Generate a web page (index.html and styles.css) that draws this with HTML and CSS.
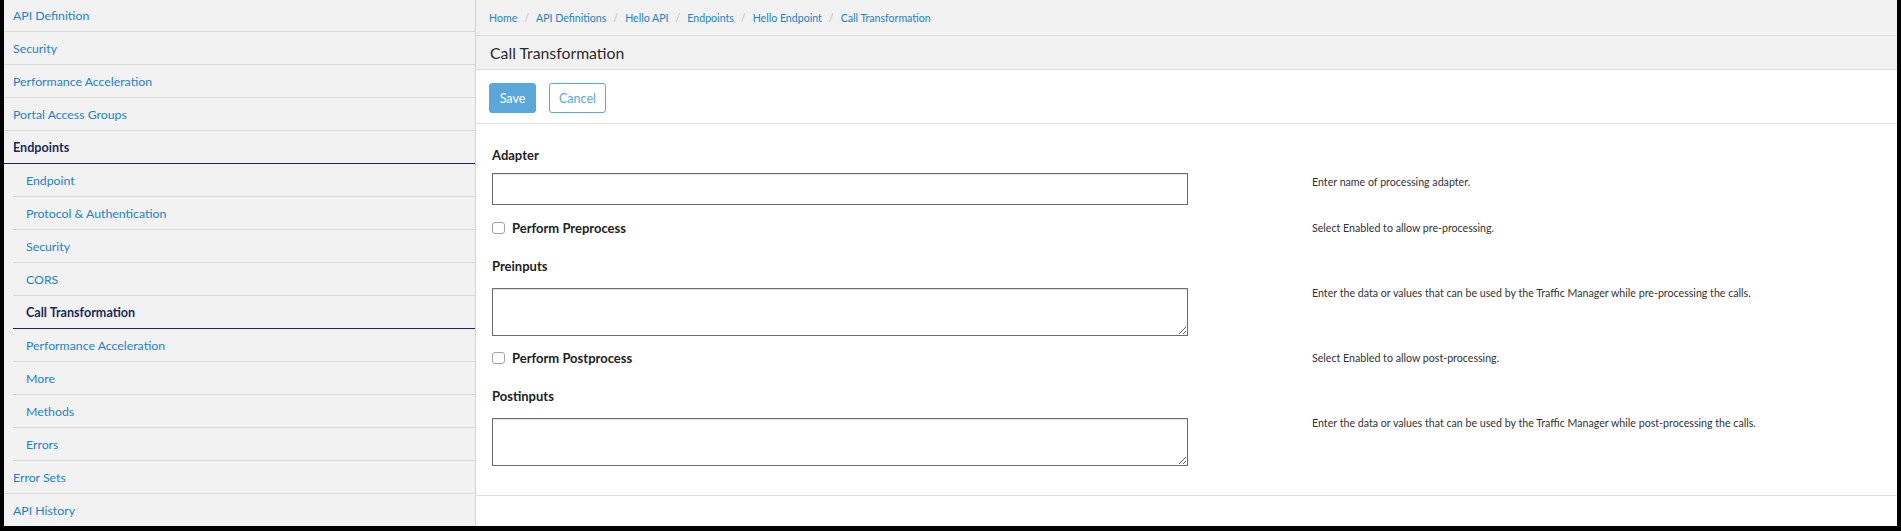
FILE: index.html
```html
<!DOCTYPE html>
<html lang="en">
<head>
<meta charset="utf-8">
<title>Call Transformation</title>
<link rel="stylesheet" href="styles.css">
</head>
<body>
<div class="frame">
  <aside class="sidebar">
    <ul class="nav">
      <li class="item"><a href="#">API Definition</a></li>
      <li class="item"><a href="#">Security</a></li>
      <li class="item"><a href="#">Performance Acceleration</a></li>
      <li class="item"><a href="#">Portal Access Groups</a></li>
      <li class="item active"><a href="#">Endpoints</a></li>
      <li class="item sub"><a href="#">Endpoint</a></li>
      <li class="item sub"><a href="#">Protocol &amp; Authentication</a></li>
      <li class="item sub"><a href="#">Security</a></li>
      <li class="item sub"><a href="#">CORS</a></li>
      <li class="item sub active"><a href="#">Call Transformation</a></li>
      <li class="item sub"><a href="#">Performance Acceleration</a></li>
      <li class="item sub"><a href="#">More</a></li>
      <li class="item sub"><a href="#">Methods</a></li>
      <li class="item sub"><a href="#">Errors</a></li>
      <li class="item"><a href="#">Error Sets</a></li>
      <li class="item"><a href="#">API History</a></li>
    </ul>
  </aside>
  <main class="main">
    <nav class="crumbs">
      <a href="#">Home</a><span class="sep">/</span>
      <a href="#">API Definitions</a><span class="sep">/</span>
      <a href="#">Hello API</a><span class="sep">/</span>
      <a href="#">Endpoints</a><span class="sep">/</span>
      <a href="#">Hello Endpoint</a><span class="sep">/</span>
      <a href="#">Call Transformation</a>
    </nav>
    <div class="titlebar"><h1>Call Transformation</h1></div>
    <div class="toolbar">
      <button class="btn btn-save" type="button">Save</button>
      <button class="btn btn-cancel" type="button">Cancel</button>
    </div>
    <form class="form">
      <div class="row">
        <div class="field">
          <label class="label" for="adapter">Adapter</label>
          <input class="text-input" id="adapter" type="text">
        </div>
        <div class="help help-field">Enter name of processing adapter.</div>
      </div>
      <div class="row row-check">
        <div class="field">
          <label class="check-label"><input class="check" type="checkbox"><span>Perform Preprocess</span></label>
        </div>
        <div class="help">Select Enabled to allow pre-processing.</div>
      </div>
      <div class="row row-group">
        <div class="field">
          <label class="label" for="pre">Preinputs</label>
          <textarea class="area" id="pre"></textarea>
        </div>
        <div class="help help-field">Enter the data or values that can be used by the Traffic Manager while pre-processing the calls.</div>
      </div>
      <div class="row row-check">
        <div class="field">
          <label class="check-label"><input class="check" type="checkbox"><span>Perform Postprocess</span></label>
        </div>
        <div class="help">Select Enabled to allow post-processing.</div>
      </div>
      <div class="row row-group">
        <div class="field">
          <label class="label" for="post">Postinputs</label>
          <textarea class="area" id="post"></textarea>
        </div>
        <div class="help help-field">Enter the data or values that can be used by the Traffic Manager while post-processing the calls.</div>
      </div>
    </form>
  </main>
</div>
</body>
</html>
```

FILE: styles.css
```css
html, body {
  margin: 0;
  padding: 0;
  background: #000;
  font-family: Lato, "Liberation Sans", sans-serif;
}

.frame {
  display: flex;
  height: 526px;
  margin: 0 4px;
  background: #fff;
  overflow: hidden;
}

/* Sidebar */
.sidebar {
  width: 472px;
  flex: none;
  box-sizing: border-box;
  background: #f2f2f2;
  border-right: 1px solid #d2d2d2;
  overflow: hidden;
}

.nav {
  list-style: none;
  margin: -1px 0 0;
  padding: 0;
}

.item {
  display: flex;
  align-items: center;
  padding: 0 0 0 9px;
  box-sizing: border-box;
  height: 33px;
  border-bottom: 1px solid #d9d9d9;
  font-size: 12.3px;
}

.item a {
  color: #2282c8;
  text-decoration: none;
}

.item.sub {
  margin-left: 9px;
  padding-left: 13px;
}

.item.active {
  border-bottom-color: #1b2a5c;
}

.item.active a {
  color: #1b2a5c;
  font-weight: 700;
  font-size: 12.6px;
}

/* Main */
.main {
  flex: 1;
  display: flex;
  flex-direction: column;
  background: #fff;
  min-width: 0;
}

.crumbs {
  height: 36px;
  box-sizing: border-box;
  display: flex;
  align-items: center;
  padding-left: 13px;
  background: #f2f2f2;
  border-bottom: 1px solid #dcdcdc;
  font-size: 10.6px;
}

.crumbs a {
  color: #2282c8;
  text-decoration: none;
}

.crumbs .sep {
  color: #bdbdbd;
  padding: 0 7px;
}

.titlebar {
  height: 34px;
  box-sizing: border-box;
  display: flex;
  align-items: center;
  padding-left: 14px;
  background: #f2f2f2;
  border-bottom: 1px solid #dcdcdc;
}

.titlebar h1 {
  margin: 0;
  font-size: 15.8px;
  font-weight: 400;
  color: #2b2b2b;
}

.toolbar {
  height: 54px;
  box-sizing: border-box;
  display: flex;
  align-items: flex-start;
  gap: 13px;
  padding: 13px 0 0 13px;
  border-bottom: 1px solid #e2e2e2;
}

.btn {
  height: 30px;
  box-sizing: border-box;
  padding: 0;
  border: 1px solid #5aa7db;
  border-radius: 3px;
  font-family: Lato, "Liberation Sans", sans-serif;
  font-size: 12.5px;
  cursor: pointer;
}

.btn-save {
  width: 47px;
  background: #5aa7db;
  color: #fff;
}

.btn-cancel {
  width: 57px;
  background: #fff;
  color: #5aa7db;
}

/* Form */
.form {
  height: 372px;
  box-sizing: border-box;
  margin: 0;
  padding: 22px 0 0 16px;
  border-bottom: 1px solid #dedede;
}

.row {
  display: flex;
  align-items: flex-start;
}

.field {
  width: 696px;
  flex: none;
}

.label {
  display: block;
  font-size: 13px;
  line-height: 18px;
  font-weight: 700;
  color: #222;
}

.text-input {
  display: block;
  width: 696px;
  height: 32px;
  box-sizing: border-box;
  margin: 9px 0 0;
  border: 1px solid #6b6b6b;
  border-radius: 0;
  box-shadow: inset 0 1px 1px #e3e3e3;
  background: #fff;
  font-family: Lato, "Liberation Sans", sans-serif;
  font-size: 13px;
  outline: none;
}

.area {
  display: block;
  width: 696px;
  height: 48px;
  box-sizing: border-box;
  margin: 13px 0 0;
  border: 1px solid #6b6b6b;
  border-radius: 0;
  box-shadow: inset 0 1px 1px #e3e3e3;
  background: #fff;
  font-family: Lato, "Liberation Sans", sans-serif;
  font-size: 13px;
  resize: both;
  outline: none;
}

.row-check {
  margin-top: 14px;
  align-items: center;
}

.row-group {
  margin-top: 20px;
}

.row-group + .row-check {
  margin-top: 13px;
}

.check-label {
  display: flex;
  align-items: center;
  gap: 7px;
  height: 18px;
  font-size: 13px;
  font-weight: 700;
  color: #222;
}

.check {
  appearance: none;
  -webkit-appearance: none;
  width: 13px;
  height: 12px;
  margin: 0;
  box-sizing: border-box;
  border: 1px solid #a3a3a3;
  border-radius: 3px;
  background: #fff;
}

.help {
  margin-left: 124px;
  font-size: 10.65px;
  line-height: 14px;
  color: #333;
  white-space: nowrap;
}

.help-field {
  padding-top: 29px;
}
```
